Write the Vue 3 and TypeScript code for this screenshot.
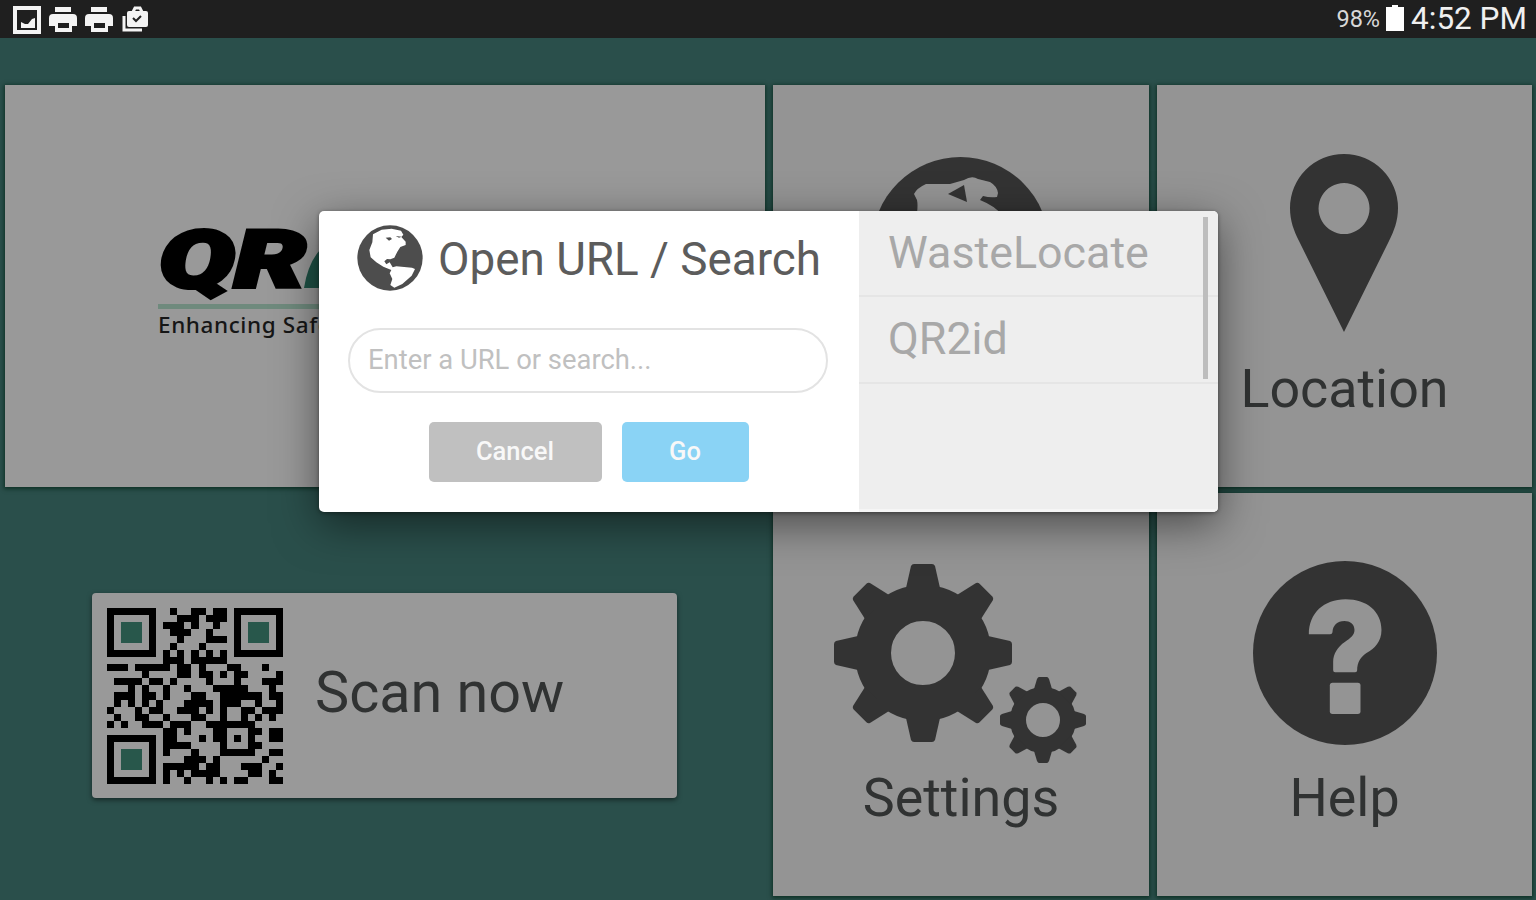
<script setup lang="ts">
import { ref } from 'vue'

const query = ref('')
const bookmarks = ref<string[]>(['WasteLocate', 'QR2id'])

const qrRows: string[] = [
  '1111111..1..11.11.1111111',
  '1.....1...111.111.1.....1',
  '1.....1.111.1..1..1.....1',
  '1.....1..111..1...1.....1',
  '1.....1...1...111.1.....1',
  '1.....1..1...1....1.....1',
  '1111111.1.1.1.1.1.1111111',
  '........111.11111........',
  '111.11111.11.1...11...1..',
  '.....1....11.11.1.11....1',
  '.1111.11.1....1...1...111',
  '...1.1..1..1...11111...1.',
  '.111.11.1...11..111111.11',
  '.1.1.1.1...1111.111..1..1',
  '1...1.11..111.1.1..11.111',
  '.1..11..1...11..1..1.1.1.',
  '1.1..111.111..1111111....',
  '........11.1...11...11.11',
  '1111111.11...1.11.1.1..11',
  '1.....1.1111....1...11...',
  '1.....1.1...1...11111..11',
  '1.....1....111.1......1..',
  '1.....1.11111.11...111..1',
  '1.....1.1.1.1111....11.1.',
  '1111111.1..1..1.1.11...11',
]

const qrPath = qrRows
  .map((row, y) =>
    [...row].map((c, x) => (c === '1' ? `M${x} ${y}h1v1h-1z` : '')).join('')
  )
  .join('')

const teeth = [0, 45, 90, 135, 180, 225, 270, 315]

function clear() {
  query.value = ''
}
</script>

<template>
  <div class="screen">
    <header class="status-bar">
      <div class="status-icons">
        <svg class="s-icon" viewBox="0 0 28 28">
          <path d="M2 2h24v24H2z" fill="none" stroke="#f4f4f4" stroke-width="4" />
          <path d="M8 22v-6l4 2 3 0 4-5 3-1v10z" fill="#f4f4f4" />
        </svg>
        <svg v-for="n in 2" :key="n" class="s-icon" viewBox="0 0 28 28">
          <path d="M6 1h16v5H6z" fill="#f4f4f4" />
          <path
            fill="#f4f4f4"
            fill-rule="evenodd"
            d="M4 8h20q4 0 4 4v8h-5v6H6v-6H0v-8q0-4 4-4zM9 17v5h11v-5z"
          />
        </svg>
        <svg class="s-icon" viewBox="0 0 28 28">
          <path d="M3 10v14h18" fill="none" stroke="#f4f4f4" stroke-width="3" />
          <path d="M12 6l2-4h5l2 4" fill="none" stroke="#f4f4f4" stroke-width="3" />
          <rect x="6" y="5" width="21" height="16" rx="2" fill="#f4f4f4" />
          <path d="M12 12l3 3 5-5" fill="none" stroke="#222" stroke-width="2" />
        </svg>
      </div>
      <div class="status-right">
        <span class="battery-text">98%</span>
        <svg class="battery" viewBox="0 0 18 26">
          <path d="M6 0h6v2h6v24H0V2h6z" fill="#fff" />
        </svg>
        <span class="clock">4:52 PM</span>
      </div>
    </header>

    <main class="board">
      <section class="left">
        <div class="tile logo-tile">
          <div class="logo">
            <svg class="logo-mark" viewBox="0 0 220 84">
              <text x="1" y="66" class="logo-text" textLength="147" lengthAdjust="spacingAndGlyphs">QR</text>
              <path d="M146 67q4-25 16-38h40l10 38z" fill="#1e5145" />
            </svg>
            <div class="tagline">Enhancing Safety</div>
          </div>
        </div>
        <div class="scan-area">
          <div class="scan-card">
            <svg class="qr" viewBox="0 0 25 25" shape-rendering="crispEdges">
              <path :d="qrPath" fill="#000" />
              <path d="M2 2h3v3H2zM20 2h3v3h-3zM2 20h3v3H2z" fill="#28574b" />
            </svg>
            <span class="label">Scan now</span>
          </div>
        </div>
      </section>

      <section class="tiles">
        <div class="tile">
          <svg class="tile-icon" viewBox="0 0 376 300">
            <circle cx="187.500" cy="160.500" r="88.500" fill="#333" />
            <path
              fill="#949494"
              d="M139 144l5-16q1-8 0-13l-3-6q3-6 12-10h24l14-4q8-5 14-1l12 3q7 4 8 11l-1 4q-7 1-14-1l-3 4q15 6 22 15l4 12-20 50-50 0z"
            />
            <path d="M175 109l16-9 3 17z" fill="#333" />
          </svg>
        </div>

        <div class="tile">
          <svg class="tile-icon" viewBox="0 0 376 300">
            <path
              fill="#333"
              fill-rule="evenodd"
              d="M187 69a54 54 0 0 1 54 54c0 13-4 23-9 33l-45 91-45-91c-5-10-9-20-9-33a54 54 0 0 1 54-54zM187 98a25.500 25.500 0 1 0 .1 0z"
            />
          </svg>
          <span class="label">Location</span>
        </div>

        <div class="tile">
          <svg class="tile-icon" viewBox="0 0 376 300">
            <g transform="translate(150 160)" fill="#333">
              <circle r="50" fill="none" stroke="#333" stroke-width="36" />
              <path
                v-for="a in teeth"
                :key="a"
                d="M-17-65l5-22q1-2 3-2h18q2 0 3 2l5 22z"
                :transform="`rotate(${a})`"
              />
            </g>
            <g transform="translate(270 227)" fill="#333">
              <circle r="25" fill="none" stroke="#333" stroke-width="16" />
              <path
                v-for="a in teeth"
                :key="a"
                d="M-9-31l3-10q1-2 2-2h8q1 0 2 2l3 10z"
                :transform="`rotate(${a})`"
              />
            </g>
          </svg>
          <span class="label low">Settings</span>
        </div>

        <div class="tile">
          <svg class="tile-icon" viewBox="0 0 376 300">
            <circle cx="188" cy="160" r="92" fill="#333" />
            <g transform="translate(73.500 57) scale(.3333)" fill="#949494">
              <path
                d="M235 253C235 190 280 148 345 148C410 148 453 185 453 240C453 275 432 296 408 309C391 320 380 337 380 361Q380 367 374 367H314Q308 367 308 361V335C308 312 322 290 343 276C360 264 372 255 372 240C372 222 358 213 342 213C320 213 307 226 306 247Q305 253 299 253Z"
              />
              <rect x="298" y="398" width="92" height="94" rx="8" />
            </g>
          </svg>
          <span class="label low">Help</span>
        </div>
      </section>
    </main>

    <div class="dialog">
      <div class="dialog-main">
        <div class="dialog-title">
          <svg class="globe" viewBox="0 0 198 198">
            <circle cx="99" cy="99" r="98" fill="#4d4d4d" />
            <path
              fill="#fff"
              d="M48 28L74 14L104 11L132 17L139 29L133 36L146 50L146 60L130 66L121 80L112 98L100 103L90 102L82 109L88 118L98 112L107 127L118 124L165 128L174 132L164 152L136 177L112 188L100 180L106 162L98 145L103 135L79 125L58 112L41 97L37 75L46 52Z"
            />
            <path d="M86 38l14-1 5 5-9 5zM116 33l18 2-8 3z" fill="#4d4d4d" />
          </svg>
          <h1>Open URL / Search</h1>
        </div>
        <input v-model="query" class="url" type="text" placeholder="Enter a URL or search..." />
        <div class="actions">
          <button class="btn cancel" @click="clear">Cancel</button>
          <button class="btn go">Go</button>
        </div>
      </div>
      <ul class="bookmarks">
        <li v-for="b in bookmarks" :key="b">{{ b }}</li>
        <span class="scrollbar"></span>
      </ul>
    </div>
  </div>
</template>

<style>
body {
  margin: 0;
  overflow: hidden;
}
</style>

<style scoped>
* {
  box-sizing: border-box;
}

.screen {
  position: relative;
  width: 1536px;
  height: 900px;
  background: #2a4f4b;
  font-family: Roboto, 'Liberation Sans', sans-serif;
  display: flex;
  flex-direction: column;
  overflow: hidden;
}

.status-bar {
  height: 38px;
  flex: none;
  background: #1f1f1f;
  display: flex;
  justify-content: space-between;
  align-items: center;
  padding: 0 9px 0 13px;
  color: #f0f0f0;
}

.status-icons {
  display: flex;
  gap: 8px;
  padding-top: 2px;
}

.s-icon {
  width: 28px;
  height: 28px;
}

.status-right {
  display: flex;
  align-items: center;
}

.battery-text {
  font-size: 23.5px;
  color: #d8d8d8;
}

.battery {
  width: 18px;
  height: 26px;
  margin: 0 7px 2px 6px;
}

.clock {
  font-size: 31.5px;
  margin-top: -2px;
}

.board {
  flex: 1;
  display: grid;
  grid-template-columns: 760px 759px;
  gap: 8px;
  padding: 47px 4px 4px 5px;
}

.left {
  display: flex;
  flex-direction: column;
}

.tile {
  background: #949494;
  box-shadow: 0 1px 4px 1px rgba(0, 35, 22, 0.7);
  display: flex;
  flex-direction: column;
  align-items: center;
}

.tiles {
  display: grid;
  grid-template-columns: 376px 375px;
  grid-template-rows: 402px 403px;
  gap: 6px 8px;
}

.tile-icon {
  width: 376px;
  height: 300px;
  flex: none;
  margin-bottom: -28px;
}

.label {
  font-size: 53.8px;
  line-height: 64px;
  color: #303232;
}

.low {
  margin-top: 1px;
}

.logo-tile {
  height: 402px;
  background: #999;
  align-items: flex-start;
  padding: 136px 0 0 153px;
}

.logo-mark {
  display: block;
  width: 220px;
  height: 84px;
  overflow: visible;
}

.logo-text {
  font-family: Roboto, sans-serif;
  font-size: 80px;
  font-weight: 900;
  font-style: italic;
  stroke: #000;
  stroke-width: 4px;
}

.tagline {
  border-top: 5px solid #6f8a7d;
  margin-top: -1px;
  font-family: 'Noto Sans', sans-serif;
  font-size: 22.5px;
  font-weight: 500;
  letter-spacing: 0.6px;
  line-height: 32px;
  width: 400px;
  color: #161616;
}

.scan-area {
  flex: 1;
  padding: 106px 0 0 87px;
}

.scan-card {
  width: 585px;
  height: 205px;
  background: #999;
  border-radius: 4px;
  box-shadow: 0 2px 5px rgba(0, 0, 0, 0.5);
  display: flex;
  align-items: center;
  gap: 32px;
  padding-left: 15px;
}

.qr {
  width: 176px;
  height: 176px;
}

.scan-card .label {
  margin-top: -6px;
  font-size: 57.5px;
}

.dialog {
  position: absolute;
  left: 319px;
  top: 211px;
  width: 899px;
  height: 301px;
  display: flex;
  background: #fff;
  border-radius: 5px;
  overflow: hidden;
  box-shadow: 0 12px 44px rgba(0, 0, 0, 0.5), 0 1px 4px rgba(0, 0, 0, 0.4);
}

.dialog-main {
  width: 540px;
  padding: 14px 30px 0 29px;
}

.dialog-title {
  display: flex;
  align-items: center;
  gap: 15px;
  padding-left: 9px;
  height: 66px;
}

.globe {
  width: 66px;
  height: 66px;
  flex: none;
}

h1 {
  margin: 3px 0 0;
  font-size: 45.8px;
  font-weight: 400;
  color: #5c5c5c;
  white-space: nowrap;
}

.url {
  display: block;
  width: 480px;
  height: 65px;
  margin-top: 37px;
  padding: 0 18px 2px;
  border: 2px solid #e3e3e3;
  border-radius: 33px;
  background: #fff;
  font-family: inherit;
  font-size: 27.4px;
  outline: none;
}

.url::placeholder {
  color: #c0c0c0;
  opacity: 1;
}

.actions {
  display: flex;
  justify-content: center;
  gap: 20px;
  margin-top: 29px;
}

.btn {
  height: 60px;
  border: none;
  border-radius: 5px;
  font-family: inherit;
  font-size: 25.5px;
  font-weight: 500;
  color: #f8f8f8;
  padding: 0 0 3px;
}

.cancel {
  width: 173px;
  background: #c0c0c0;
}

.go {
  width: 127px;
  background: #8ad3f5;
}

.bookmarks {
  position: relative;
  flex: 1;
  margin: 0;
  padding: 0;
  list-style: none;
  background: #eee;
  border-bottom: 3px solid #f5f5f5;
}

.bookmarks li {
  height: 87px;
  padding-left: 29px;
  border-bottom: 2px solid #e5e5e5;
  font-size: 44.8px;
  line-height: 83px;
  color: #a8a8a8;
}

.bookmarks li:first-child {
  height: 86px;
}

.scrollbar {
  position: absolute;
  right: 10px;
  top: 6px;
  width: 5px;
  height: 162px;
  background: #bdbdbd;
}
</style>
